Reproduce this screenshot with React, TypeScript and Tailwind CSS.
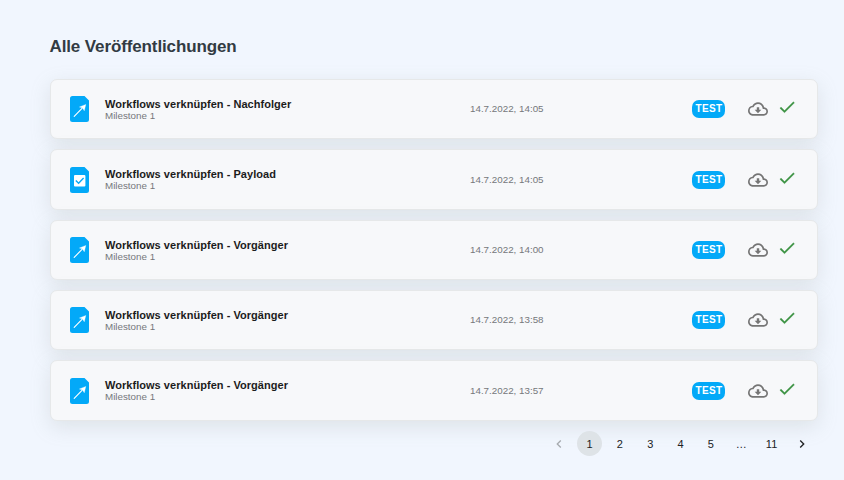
import React from "react";

type Kind = "arrow" | "check";

interface Release {
  title: string;
  date: string;
  kind: Kind;
}

const releases: Release[] = [
  { title: "Workflows verknüpfen - Nachfolger", date: "14.7.2022, 14:05", kind: "arrow" },
  { title: "Workflows verknüpfen - Payload", date: "14.7.2022, 14:05", kind: "check" },
  { title: "Workflows verknüpfen - Vorgänger", date: "14.7.2022, 14:00", kind: "arrow" },
  { title: "Workflows verknüpfen - Vorgänger", date: "14.7.2022, 13:58", kind: "arrow" },
  { title: "Workflows verknüpfen - Vorgänger", date: "14.7.2022, 13:57", kind: "arrow" },
];

function FileIcon({ kind }: { kind: Kind }) {
  return (
    <svg width="19" height="26" viewBox="0 0 19 26" className="shrink-0">
      <path d="M2.5 0H14.5L19 4.6V23.5A2.5 2.5 0 0 1 16.5 26H2.5A2.5 2.5 0 0 1 0 23.5V2.5A2.5 2.5 0 0 1 2.5 0Z" fill="#03a9f8" />
      {kind === "arrow" ? (
        <>
          <path d="M4.2 20.4L12 12.4" stroke="#fff" strokeWidth="1.1" strokeLinecap="round" />
          <path d="M15.8 8.4L14.3 14.8L12.5 12L9.4 11Z" fill="#fff" stroke="#fff" strokeWidth="0.3" />
        </>
      ) : (
        <>
          <rect x="4" y="8" width="11.4" height="11.4" rx="1" fill="#fff" />
          <path d="M5.8 13.4L8.6 16.2L13.6 11" stroke="#03a9f8" strokeWidth="1.4" fill="none" />
        </>
      )}
    </svg>
  );
}

function CloudIcon() {
  return (
    <svg width="20" height="20" viewBox="0 0 24 24" fill="#757575" className="shrink-0">
      <path d="M19.35 10.04C18.67 6.59 15.64 4 12 4 9.11 4 6.6 5.64 5.35 8.04 2.34 8.36 0 10.91 0 14c0 3.31 2.69 6 6 6h13c2.76 0 5-2.24 5-5 0-2.64-2.05-4.78-4.65-4.96zM19 18H6c-2.21 0-4-1.79-4-4 0-2.05 1.53-3.76 3.56-3.97l1.07-.11.5-.95C8.08 7.14 9.94 6 12 6c2.62 0 4.88 1.86 5.39 4.43l.3 1.5 1.53.11c1.56.1 2.78 1.41 2.78 2.96 0 1.65-1.35 3-3 3zm-5.55-8h-2.9v3H8l4 4 4-4h-2.55z" />
    </svg>
  );
}

function CheckIcon() {
  return (
    <svg width="20" height="20" viewBox="0 0 24 24" fill="#3b9242" stroke="#3b9242" strokeWidth="0.3" className="mb-[4px] ml-[9px] shrink-0">
      <path d="M9 16.17 4.83 12l-1.42 1.41L9 19 21 7l-1.41-1.41z" />
    </svg>
  );
}

function Chevron({ dir }: { dir: "left" | "right" }) {
  const color = dir === "left" ? "#a6aaaf" : "#202224";
  return (
    <svg width="16" height="16" viewBox="0 0 24 24" fill={color}>
      <path d={dir === "left" ? "M15.41 7.41 14 6l-6 6 6 6 1.41-1.41L10.83 12z" : "M10 6 8.59 7.41 13.17 12l-4.58 4.59L10 18l6-6z"} />
    </svg>
  );
}

function ReleaseCard({ title, date, kind }: Release) {
  return (
    <li className="flex h-[60.4px] items-center rounded-[7px] border border-[#e6e8e9] bg-[#f7f8fa] pr-[20px] pl-[19px] shadow-[0_6px_20px_rgba(149,160,155,0.22)]">
      <FileIcon kind={kind} />
      <div className="ml-[16px] w-[365px] shrink-0 pt-[0.4px]">
        <div className="text-[11px] leading-[13px] font-bold tracking-[0.04px] text-[#1c1c1c]">{title}</div>
        <div className="-mt-px text-[9.8px] leading-[11px] text-[#75777b]">Milestone 1</div>
      </div>
      <div className="w-[222px] shrink-0 text-[9.8px] leading-[12px] text-[#75777b]">{date}</div>
      <span className="mr-[23px] flex h-[18px] w-[33px] shrink-0 items-center justify-center rounded-[7px] bg-[#03a9f8] pb-px pl-px text-[10px] font-bold tracking-[0.4px] text-white">
        TEST
      </span>
      <CloudIcon />
      <CheckIcon />
    </li>
  );
}

const pages = ["1", "2", "3", "4", "5", "…", "11"];

export default function App() {
  return (
    <main className="h-[480px] w-[844px] overflow-hidden bg-[#f1f6fe] pt-[37px] pr-[26px] pl-[50px] font-['Liberation_Sans',Arial,sans-serif]">
      <h1 className="-ml-[0.5px] text-[17px] leading-[20px] font-bold tracking-[-0.12px] text-[#323b43]">Alle Veröffentlichungen</h1>
      <ul className="mt-[22px] flex flex-col gap-[9.95px]">
        {releases.map((release, i) => (
          <ReleaseCard key={i} {...release} />
        ))}
      </ul>
      <nav className="mt-[10.3px] mr-[3.6px] flex items-center justify-end gap-[5.35px] text-[11px] text-[#202224]">
        <span className="flex size-[25px] items-center justify-center">
          <Chevron dir="left" />
        </span>
        {pages.map((page) => (
          <span
            key={page}
            className={
              page === "1"
                ? "flex size-[25px] items-center justify-center rounded-full bg-[#dee3e7] pt-[2px]"
                : "flex size-[25px] items-center justify-center pt-[2px]"
            }
          >
            {page}
          </span>
        ))}
        <span className="flex size-[25px] items-center justify-center">
          <Chevron dir="right" />
        </span>
      </nav>
    </main>
  );
}
